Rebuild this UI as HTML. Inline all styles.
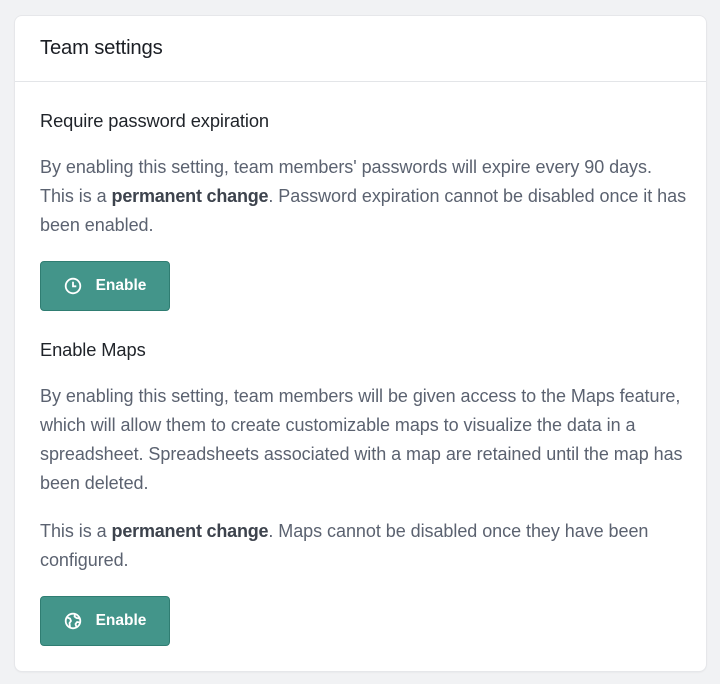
<!DOCTYPE html>
<html><head><style>
body{margin:0;background:#f1f2f4;font-family:"Liberation Sans",sans-serif;width:720px;height:684px;overflow:hidden}
.card{position:absolute;left:15px;top:16px;width:691px;height:655px;background:#fff;border-radius:7px;box-shadow:0 0 0 1px #e6e7ea,0 1px 2px rgba(0,0,0,.08)}
.hd{height:65px;border-bottom:1px solid #e3e5e8;}
.hd div{position:absolute;left:25px;top:21px;font-size:20.3px;color:#1b1e24;letter-spacing:-0.2px}
.t{position:absolute;left:25px;font-size:18.3px;color:#1f2329;letter-spacing:-0.1px}
.p{position:absolute;left:25px;font-size:18px;line-height:29px;color:#5b6270;letter-spacing:-0.05px;white-space:nowrap}
.p b{color:#3d434d;letter-spacing:-0.2px}
.btn{position:absolute;left:25px;width:128px;height:48px;background:#43958a;border:1px solid #2f7d72;border-radius:4px;color:#fff;font-weight:bold;font-size:15.5px;display:flex;align-items:center;justify-content:center;gap:14px}
</style></head><body>
<div class="card">
<div class="hd"><div>Team settings</div></div>
<div class="t" style="top:94px">Require password expiration</div>
<div class="p" style="top:137px">By enabling this setting, team members' passwords will expire every 90 days.<br>This is a <b>permanent change</b>. Password expiration cannot be disabled once it has<br>been enabled.</div>
<div class="btn" style="top:245px"><svg width="18" height="18" viewBox="0 0 18 18" fill="none" stroke="#fff" stroke-width="1.8"><circle cx="9" cy="9" r="7.3"/><path d="M9 4.8V9.3H12.3"/></svg><span>Enable</span></div>
<div class="t" style="top:323px">Enable Maps</div>
<div class="p" style="top:366px">By enabling this setting, team members will be given access to the Maps feature,<br>which will allow them to create customizable maps to visualize the data in a<br>spreadsheet. Spreadsheets associated with a map are retained until the map has<br>been deleted.</div>
<div class="p" style="top:501px">This is a <b>permanent change</b>. Maps cannot be disabled once they have been<br>configured.</div>
<div class="btn" style="top:580px"><svg width="18" height="18" viewBox="0 0 18 18" fill="none" stroke="#fff" stroke-width="1.8" stroke-linejoin="round"><circle cx="9" cy="9" r="7.3"/><path d="M3 5.5L6 6.5 7 9 5.5 11 6 15.5M11 2.2L10.5 4.5 12.5 6 15.6 6.5M16 10.5L13 10 11.5 12 12.5 15.2"/></svg><span>Enable</span></div>
</div>
</body></html>
